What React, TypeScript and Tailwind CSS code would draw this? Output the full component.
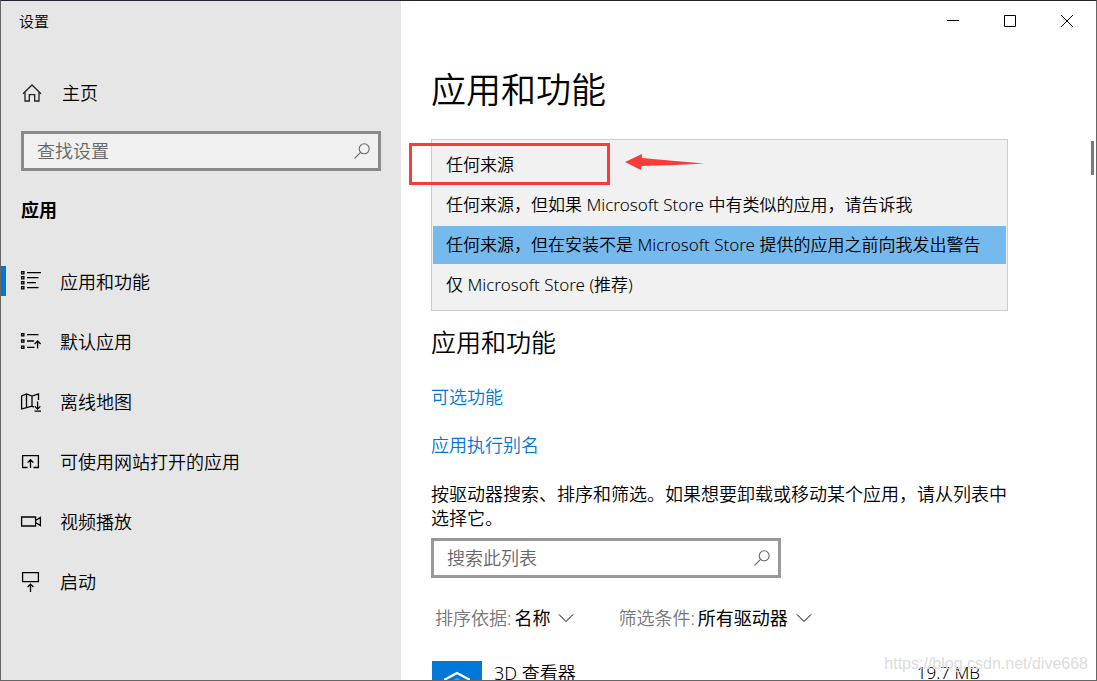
import React, { useState } from 'react';

type IconProps = { className?: string };

const HomeIcon = ({ className }: IconProps) => (
  <svg viewBox="0 0 20 18" className={className} fill="none" stroke="currentColor" strokeWidth="1.3">
    <path d="M1 9.7 10 1l9 8.7M3 8.2V17h4.3v-6.3h5.4V17H17V8.2" />
  </svg>
);

const SearchIcon = ({ className }: IconProps) => (
  <svg viewBox="0 0 16 16" className={className} fill="none" stroke="currentColor" strokeWidth="1.1">
    <circle cx="10.2" cy="5.8" r="5" />
    <path d="M6.6 9.4.6 15.4" />
  </svg>
);

const ChevronIcon = ({ className }: IconProps) => (
  <svg viewBox="0 0 16 10" className={className} fill="none" stroke="currentColor" strokeWidth="1">
    <path d="m1 1.5 7 7 7-7" />
  </svg>
);

const AppsIcon = ({ className }: IconProps) => (
  <svg viewBox="0 0 22 22" className={className} fill="none" stroke="currentColor" strokeWidth="1.3">
    <path d="M1.6 1.6h2.3v2.2H1.6zM1.6 6.6h2.3v2.2H1.6zM1.6 11.6h2.3v2.2H1.6zM1.6 16.6h2.3v2.2H1.6z" />
    <path d="M7 2.7h14M7 7.7h11.5M7 12.7h9M7 17.7h11.5" />
  </svg>
);

const DefaultAppsIcon = ({ className }: IconProps) => (
  <svg viewBox="0 0 22 22" className={className} fill="none" stroke="currentColor" strokeWidth="1.3">
    <path d="M1.6 3.6h2.3v2.2H1.6zM1.6 9.9h2.3v2.2H1.6zM1.6 16.2h2.3v2.2H1.6z" />
    <path d="M7 4.7h11.5M7 11h7M7 17.3h7.5M17.6 18.6v-7.2M14.6 14l3-3 3 3" />
  </svg>
);

const MapsIcon = ({ className }: IconProps) => (
  <svg viewBox="0 0 22 22" className={className} fill="none" stroke="currentColor" strokeWidth="1.3">
    <path d="M14 17.2 12 16.2 6.5 17.6 1.6 19V6L6.5 4l5.5 2 6.5-2v6M6.5 4v13.6M12 6v10.2" />
    <path d="M17.6 11.5V19M14.9 16.4l2.7 2.7 2.7-2.7M14.5 21.2H21" />
  </svg>
);

const WebAppsIcon = ({ className }: IconProps) => (
  <svg viewBox="0 0 22 22" className={className} fill="none" stroke="currentColor" strokeWidth="1.3">
    <path d="M7.5 17.5H2.6V5.6h15.8v11.9h-4.9M10.5 18V9.8M7.6 12.6l2.9-2.9 2.9 2.9" />
  </svg>
);

const VideoIcon = ({ className }: IconProps) => (
  <svg viewBox="0 0 22 22" className={className} fill="none" stroke="currentColor" strokeWidth="1.3">
    <path d="M1.6 7h14v9h-14zM15.6 10.5l4.8-3v8l-4.8-3" />
  </svg>
);

const StartupIcon = ({ className }: IconProps) => (
  <svg viewBox="0 0 22 22" className={className} fill="none" stroke="currentColor" strokeWidth="1.3">
    <path d="M2.6 2.6h15.8v9H2.6zM10.5 22v-7.8M7.6 17l2.9-2.9 2.9 2.9" />
  </svg>
);

const NAV_ITEMS = [
  { label: '应用和功能', Icon: AppsIcon },
  { label: '默认应用', Icon: DefaultAppsIcon },
  { label: '离线地图', Icon: MapsIcon },
  { label: '可使用网站打开的应用', Icon: WebAppsIcon },
  { label: '视频播放', Icon: VideoIcon },
  { label: '启动', Icon: StartupIcon },
];

const SOURCES = [
  '任何来源',
  '任何来源，但如果 Microsoft Store 中有类似的应用，请告诉我',
  '任何来源，但在安装不是 Microsoft Store 提供的应用之前向我发出警告',
  '仅 Microsoft Store (推荐)',
];

const Sidebar = () => {
  const [active, setActive] = useState(0);

  return (
    <aside className="w-[400px] shrink-0 bg-[#e6e6e6]">
      <div className="flex h-10 items-center px-[18px] text-[15px]">设置</div>
      <a href="#home" className="mt-[22px] flex h-[60px] items-center pl-[21px]">
        <HomeIcon className="h-[18px] w-5 text-[#222]" />
        <span className="ml-5">主页</span>
      </a>
      <div className="mx-5 mt-2 flex h-10 items-center border-3 border-[#8a8a8a] bg-[#f0f0f0] pr-2 pl-[13px]">
        <input
          type="text"
          aria-label="查找设置"
          placeholder="查找设置"
          className="min-w-0 flex-1 bg-transparent outline-none placeholder:text-[#666]"
        />
        <SearchIcon className="h-4 w-4 text-[#666]" />
      </div>
      <h2 className="mt-5 px-5 leading-[38px] font-bold">应用</h2>
      <nav className="mt-[22px]">
        {NAV_ITEMS.map(({ label, Icon }, i) => (
          <button
            key={label}
            type="button"
            onClick={() => setActive(i)}
            className="flex h-[60px] w-full items-center text-left"
          >
            <span className={i === active ? 'h-[30px] w-[5px] bg-[#0078d7]' : 'h-[30px] w-[5px]'} />
            <Icon className="ml-[14px] h-[22px] w-[22px]" />
            <span className="ml-[18px] pt-0.5">{label}</span>
          </button>
        ))}
      </nav>
    </aside>
  );
};

const WindowControls = () => (
  <div className="flex h-10 justify-end pr-px">
    <button type="button" aria-label="最小化" className="flex w-[57px] items-center justify-center">
      <svg viewBox="0 0 12 12" className="h-3 w-3" stroke="black" fill="none">
        <path d="M0 5.5h12" />
      </svg>
    </button>
    <button type="button" aria-label="最大化" className="flex w-[57px] items-center justify-center">
      <svg viewBox="0 0 12 12" className="h-3 w-3" stroke="black" fill="none">
        <path d="M.5.5h11v11H.5z" />
      </svg>
    </button>
    <button type="button" aria-label="关闭" className="flex w-[57px] items-center justify-center">
      <svg viewBox="0 0 12 12" className="h-3 w-3" stroke="black" fill="none">
        <path d="m0 0 12 12M12 0 0 12" />
      </svg>
    </button>
  </div>
);

const SourceList = () => {
  const [selected, setSelected] = useState(2);

  return (
    <div className="relative">
      <div
        role="listbox"
        aria-label="选择获取应用的位置"
        className="flex flex-col gap-0.5 border border-[#ccc] bg-[#f1f1f1] px-px py-1.5 text-[17px]"
      >
        {SOURCES.map((source, i) => (
          <button
            key={source}
            type="button"
            role="option"
            aria-selected={i === selected}
            onClick={() => setSelected(i)}
            className={
              i === selected
                ? 'h-[38px] bg-[#76b9ed] pl-[13px] text-left whitespace-nowrap'
                : 'h-[38px] pl-[13px] text-left whitespace-nowrap'
            }
          >
            {source}
          </button>
        ))}
      </div>
      {/* annotation */}
      <div className="pointer-events-none absolute top-1 -left-[22px] h-[42px] w-[201px] border-3 border-[#fb3b3a]" />
      <svg viewBox="0 0 80 18" className="pointer-events-none absolute top-[14px] left-[194px] h-[18px] w-20" fill="#fb3b3a">
        <path d="M0 9 17 1v4l33 3 29 2.5L50 12l-33.5 1-.5 4z" />
      </svg>
    </div>
  );
};

type FilterProps = { id: string; label: string; options: string[] };

const Filter = ({ id, label, options }: FilterProps) => (
  <div className="flex items-center">
    <label htmlFor={id} className="text-[#767676]">
      {label}
    </label>
    <div className="ml-[3px] flex items-center">
      <select id={id} className="-mr-4 field-sizing-content appearance-none bg-transparent pr-6 font-normal outline-none">
        {options.map((option) => (
          <option key={option}>{option}</option>
        ))}
      </select>
      <ChevronIcon className="pointer-events-none h-[10px] w-4" />
    </div>
  </div>
);

const App: React.FC = () => {
  return (
    <div className="relative flex h-screen overflow-hidden border border-[#666] border-t-[#23232f] bg-white font-['Noto_Sans','Noto_Sans_CJK_SC',sans-serif] text-[18px] leading-6 font-[350] text-black">
      <Sidebar />
      <div className="min-w-0 flex-1">
        <WindowControls />
        <main className="max-w-[637px] px-[30px]">
          <h1 className="flex h-[98px] items-center text-[35px]">应用和功能</h1>
          <SourceList />
          <h2 className="text-[25px] leading-[62px]">应用和功能</h2>
          <div className="flex flex-col items-start text-[#0078d7]">
            <a href="#optional" className="leading-[48px]">可选功能</a>
            <a href="#alias" className="leading-[48px]">应用执行别名</a>
          </div>
          <p className="mt-[13px]">
            按驱动器搜索、排序和筛选。如果想要卸载或移动某个应用，请从列表中选择它。
          </p>
          <div className="mt-2 flex h-10 w-[350px] items-center border-3 border-[#999] pr-2 pl-[13px]">
            <input
              type="text"
              aria-label="搜索此列表"
              placeholder="搜索此列表"
              className="min-w-0 flex-1 bg-transparent outline-none placeholder:text-[#666]"
            />
            <SearchIcon className="h-4 w-4 text-[#666]" />
          </div>
          <div className="mt-5 flex h-10 items-center gap-11 pl-1">
            <Filter id="sort" label="排序依据:" options={['名称', '大小', '安装日期']} />
            <Filter id="drive" label="筛选条件:" options={['所有驱动器']} />
          </div>
          <div className="mt-[23px] flex items-start pl-px">
            <div className="flex h-[50px] w-[50px] items-center justify-center bg-[#0078d7]">
              <svg viewBox="0 0 30 30" className="h-[30px] w-[30px]" fill="none" stroke="white" strokeWidth="2.2">
                <path d="M3 8.5 15 2l12 6.5v13L15 28 3 21.5z" />
                <path d="m8 11 7-4 7 4-7 4z" fill="white" stroke="none" opacity=".3" />
              </svg>
            </div>
            <span className="ml-3">3D 查看器</span>
            <span className="mr-7 ml-auto text-[17px]">19.7 MB</span>
          </div>
        </main>
      </div>
      <div className="absolute top-[140px] right-[2px] h-[34px] w-[3px] bg-[#7a7a7a]" />
      <div className="pointer-events-none absolute right-2 bottom-1 font-['Liberation_Sans',sans-serif] text-[16px] text-[#dcdcdc]">
        https://blog.csdn.net/dive668
      </div>
    </div>
  );
};

export default App;
